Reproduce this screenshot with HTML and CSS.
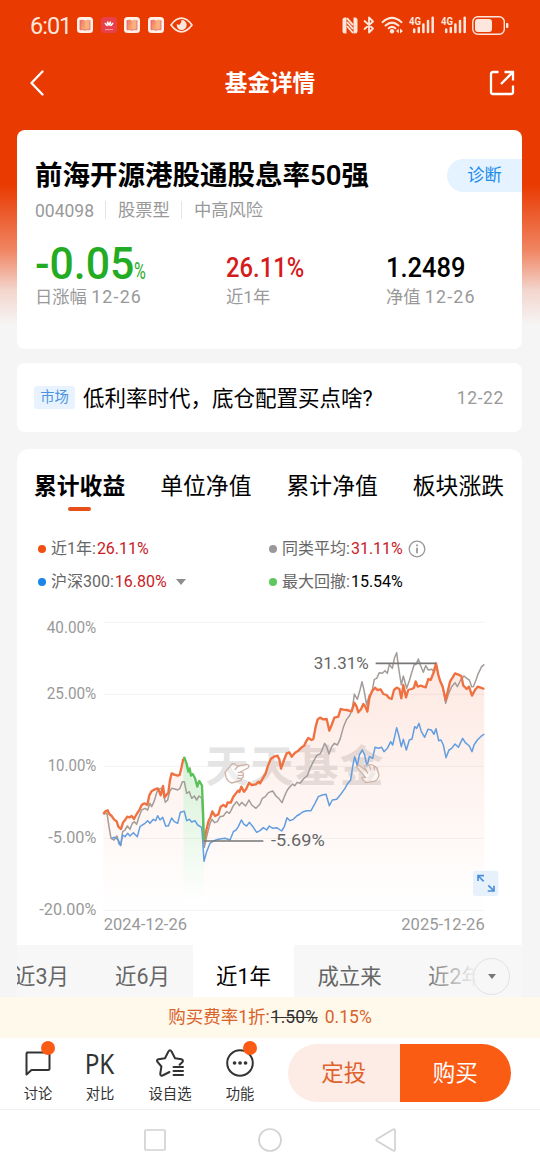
FILE: index.html
```html
<!DOCTYPE html>
<html lang="zh-CN">

<head>
    <meta charset="UTF-8">
    <meta name="viewport" content="width=device-width, initial-scale=1.0">
    <title>基金详情</title>
    <link rel="stylesheet" href="styles.css">
</head>

<body>
    <!-- Shared icons -->
    <svg width="0" height="0" class="defs">
        <defs>
            <linearGradient id="book-fill" x1="0" y1="0" x2="1" y2="1">
                <stop offset="0" stop-color="#f0707a" />
                <stop offset="1" stop-color="#f8b45c" />
            </linearGradient>
            <symbol id="book" viewBox="0 0 16 16">
                <rect width="16" height="16" rx="3.5" fill="#fff0e8" />
                <path d="M3 3.2Q5.500 2.400 8 3.500V13.200Q5.500 12.200 3 12.800Z" fill="url(#book-fill)" />
                <path d="M8 3.500Q10.500 2.400 13 3.200V12.800Q10.500 12.200 8 13.200Z" fill="#f8b080" />
                <path d="M3 3.200V12.800Q5.500 12.200 8 13.200Q10.500 12.200 13 12.800V3.200" fill="none" stroke="#e0566c" stroke-width=".7" />
            </symbol>
            <symbol id="signal" viewBox="0 0 26 18">
                <text x="0" y="8.500" class="signal-text" textLength="12" lengthAdjust="spacingAndGlyphs">4G</text>
                <g stroke="#fde6dc" stroke-width="2.500" stroke-linecap="round">
                    <path d="M5.200 13.500V16M9.800 12V16M14.400 8.500V16M19 5V16M23.700 1.800V16" />
                </g>
            </symbol>
        </defs>
    </svg>

    <div class="header">
        <div class="status-bar">
            <span class="clock">6:01</span>
            <div class="notices">
                <svg width="16" height="16"><use href="#book" /></svg>
                <svg width="16" height="16" viewBox="0 0 16 16">
                    <rect width="16" height="16" rx="3.5" fill="#e8404a" />
                    <g fill="#fff">
                        <ellipse cx="7" cy="6.500" rx="1" ry="2.400" transform="rotate(-14 7 6.500)" />
                        <ellipse cx="9" cy="6.500" rx="1" ry="2.400" transform="rotate(14 9 6.500)" />
                        <ellipse cx="5.200" cy="7.500" rx=".9" ry="2.200" transform="rotate(-42 5.200 7.500)" />
                        <ellipse cx="10.800" cy="7.500" rx=".9" ry="2.200" transform="rotate(42 10.800 7.500)" />
                        <rect x="4" y="12.300" width="8" height=".8" opacity=".6" />
                    </g>
                </svg>
                <svg width="16" height="16"><use href="#book" /></svg>
                <svg width="16" height="16"><use href="#book" /></svg>
            </div>
            <svg class="eye" width="23" height="16" viewBox="0 0 23 16">
                <path d="M1 8Q6 1.200 11.500 1.200T22 8Q17 14.800 11.500 14.800T1 8Z" fill="none" stroke="#fde6dc" stroke-width="1.700" />
                <path d="M11.500 3A5 5 0 1 1 6.800 7Q8.500 8.500 10 7.200T11.500 3Z" fill="#fde6dc" />
            </svg>
            <div class="status-right">
                <svg width="16" height="17" viewBox="0 0 16 17">
                    <path d="M4.500.5H3Q.5.5.5 3V14Q.5 16.500 3 16.500H4.500ZM11.500.5H13Q15.500.5 15.500 3V14Q15.500 16.500 13 16.500H11.500Z" fill="#fde6dc" />
                    <path d="M5 5L11 12M5 1.200L11 8.200M5 9L11 16" stroke="#fde6dc" stroke-width="1.900" />
                </svg>
                <svg width="12" height="18" viewBox="0 0 12 18">
                    <path d="M1.500 5L10 12.500L6 16.500V1.500L10 5.500L1.500 13" fill="none" stroke="#fde6dc" stroke-width="1.800" stroke-linejoin="round" stroke-linecap="round" />
                </svg>
                <svg width="23" height="18" viewBox="0 0 23 18">
                    <g fill="none" stroke="#fde6dc" stroke-width="2" stroke-linecap="round">
                        <path d="M1.500 6.200Q11 -2.400 20.500 6.200" />
                        <path d="M4.500 9.500Q11 3.700 17.500 9.500" />
                        <path d="M7.600 12.300Q11 9.500 14.400 12.300" />
                    </g>
                    <circle cx="11" cy="15.300" r="2.200" fill="#fde6dc" />
                    <path d="M15 15L17.800 12.500V17.500ZM22 15L19 12.500V17.500Z" fill="#fde6dc" />
                </svg>
                <svg width="26" height="18"><use href="#signal" /></svg>
                <svg width="26" height="18"><use href="#signal" /></svg>
                <svg width="37" height="19" viewBox="0 0 37 19">
                    <rect x=".8" y=".8" width="31.500" height="17.400" rx="5" fill="none" stroke="#fde6dc" stroke-width="1.400" />
                    <rect x="3" y="3" width="17" height="13" rx="3" fill="#fde6dc" />
                    <rect x="34" y="7" width="2.400" height="5" rx="1" fill="#fde6dc" />
                </svg>
            </div>
        </div>
        <div class="nav-bar">
            <svg width="16" height="26" viewBox="0 0 16 26">
                <path d="M13.500 1.500L2.500 13L13.500 24.500" fill="none" stroke="#fff" stroke-width="2.300" stroke-linecap="round" stroke-linejoin="round" />
            </svg>
            <h1>基金详情</h1>
            <svg width="26" height="26" viewBox="0 0 26 26">
                <path d="M9.500 2H4Q2 2 2 4V22Q2 24 4 24H22Q24 24 24 22V15.500" fill="none" stroke="#fff" stroke-width="2.300" />
                <path d="M12 14L23.500 2.500M15.500 2H24V10.500" fill="none" stroke="#fff" stroke-width="2.300" />
            </svg>
        </div>
    </div>

    <div class="content">
        <!-- Fund summary -->
        <div class="card summary">
            <div class="title-row">
                <h2>前海开源港股通股息率50强</h2>
                <span class="diagnose">诊断</span>
            </div>
            <div class="meta">
                <span class="code">004098</span>
                <span>股票型</span>
                <span>中高风险</span>
            </div>
            <div class="figures">
                <div class="figure">
                    <div class="value big green"><span class="num day">-0.05</span><span class="percent">%</span></div>
                    <div class="caption">日涨幅 <span>12-26</span></div>
                </div>
                <div class="figure">
                    <div class="value red"><span class="num year">26.11%</span></div>
                    <div class="caption">近1年</div>
                </div>
                <div class="figure">
                    <div class="value"><span class="num worth">1.2489</span></div>
                    <div class="caption">净值 <span>12-26</span></div>
                </div>
            </div>
        </div>

        <!-- News -->
        <div class="card news">
            <span class="tag">市场</span>
            <span class="news-title">低利率时代，底仓配置买点啥?</span>
            <span class="news-date">12-22</span>
        </div>

        <!-- Chart -->
        <div class="card performance">
            <div class="tabs">
                <span class="tab active">累计收益</span>
                <span class="tab">单位净值</span>
                <span class="tab">累计净值</span>
                <span class="tab">板块涨跌</span>
            </div>
            <div class="legend">
                <div class="legend-item"><i class="dot dot-orange"></i>近1年:<b class="red">26.11%</b></div>
                <div class="legend-item"><i class="dot dot-gray"></i>同类平均:<b class="red">31.11%</b>
                    <svg class="info" width="18" height="18" viewBox="0 0 18 18">
                        <circle cx="9" cy="9" r="7.800" fill="none" stroke="#999" stroke-width="1.300" />
                        <path d="M9 4.500V6.300M9 7.700V13.300" stroke="#999" stroke-width="1.800" />
                    </svg>
                </div>
                <div class="legend-item"><i class="dot dot-blue"></i>沪深300:<b class="red">16.80%</b><i class="caret"></i></div>
                <div class="legend-item"><i class="dot dot-green"></i>最大回撤:<b>15.54%</b></div>
            </div>
            <div class="chart">
                <svg width="505" height="335" viewBox="-234 0 1515 1005">
                    <defs>
                        <linearGradient id="area-orange" x1="0" y1="160" x2="0" y2="900" gradientUnits="userSpaceOnUse">
                            <stop offset="0" stop-color="#f4683a" stop-opacity=".15" />
                            <stop offset="1" stop-color="#f4683a" stop-opacity="0" />
                        </linearGradient>
                        <linearGradient id="area-green" x1="0" y1="440" x2="0" y2="880" gradientUnits="userSpaceOnUse">
                            <stop offset="0" stop-color="#55c455" stop-opacity=".25" />
                            <stop offset="1" stop-color="#55c455" stop-opacity="0" />
                        </linearGradient>
                    </defs>
                    <path class="grid" d="M25 37H1168M25 253H1168M25 469H1168M25 685H1168M25 901H1168" />
                    <text class="watermark" x="331" y="516" textLength="534">天天基金</text>
                    <path fill="url(#area-orange)" d="M25 612L38 601L78 657L97 620L117 627L140 585L157 585L170 543L188 535L197 556L204 528L209 562L220 548L230 490L254 495L265 446L265 901H25Z
                        M327 695L352 604L370 613L439 530L447 545L462 518L483 523L512 490L537 440L547 437L558 476L575 430L590 440L640 384L655 387L668 328L695 327L703 362L718 323L730 320L737 297L755 300L770 304L778 278L790 307L805 282L817 305L830 245L840 233L865 252L890 267L905 233L919 265L925 225L933 262L957 233L962 214L968 230L992 232L1023 160L1052 270L1065 215L1080 190L1099 198L1105 227L1122 230L1131 257L1148 230L1168 237V901H327Z" />
                    <path fill="url(#area-green)" d="M265 446L268 443L280 485L307 530L321 527L327 690V901H265Z" />
                    <polyline class="line gray" points="25,612 36,610 42,650 48,685 57,690 66,678 72,702 77,705 83,665 90,660 97,648 105,658 112,640 118,635 125,643 132,620 140,600 150,595 158,600 165,580 170,590 177,575 186,545 193,537 200,535 207,560 211,577 218,570 224,545 230,535 240,537 248,540 255,535 262,515 268,515 275,550 283,545 290,565 298,558 305,570 312,558 321,565 324,650 328,712
                        335,680 345,640 351,628 359,638 367,635 375,620 385,618 395,605 403,610 408,602 415,587 425,575 433,587 440,577 452,588 462,570 470,585 483,595 495,582 502,565 511,560 520,548 533,543 543,558 551,565 561,578 570,555 577,540 585,530 593,522 599,527 607,517 615,520 627,505 637,497 645,475 655,455 665,437 677,430 689,400 695,410 702,432 710,410 718,400 727,405 735,388
                        745,352 755,328 765,315 773,290 778,252 787,268 795,240 801,215 807,240 815,285 823,255 830,250 838,208 845,205 853,188 862,190 870,182 877,190 883,163 892,175 898,145 905,128 911,175 919,225 925,198 935,235 943,212 950,188 957,165 963,163 970,147 976,165 985,187 992,167 1000,180 1010,178 1018,185 1023,165 1033,205 1043,230 1052,280 1061,250 1070,230 1080,218 1087,230 1097,210 1107,198 1115,205 1123,210 1130,230 1135,230 1143,210 1150,190 1160,170 1168,163" />
                    <polyline class="line blue" points="50,685 60,682 70,690 77,707 83,675 90,680 98,670 105,678 115,668 127,680 135,650 142,645 150,640 158,632 165,640 175,628 182,632 188,617 195,630 203,622 212,648 220,648 230,624 238,635 248,640 256,607 268,604 275,632 283,628 290,636 300,632 308,645 320,652 323,690 327,754
                        335,725 345,700 355,693 370,688 390,685 405,690 415,665 423,660 430,650 439,630 447,643 455,648 463,637 475,652 485,667 495,662 505,653 515,660 523,648 533,655 545,653 560,663 568,650 576,623 585,632 595,628 605,618 615,612 625,605 635,602 648,602 660,580 670,560 682,555 693,553 703,587 712,570 725,568 735,556
                        743,545 750,535 757,522 767,510 773,470 779,440 787,468 793,435 802,420 809,435 816,470 823,440 833,445 840,412 850,415 860,412 867,425 877,415 887,395 893,405 899,380 905,353 911,375 919,410 925,388 934,420 943,390 951,387 959,350 965,355 972,340 979,365 989,382 999,358 1009,360 1017,373 1023,356 1031,392 1038,390 1045,405 1053,443 1062,420 1070,415 1080,402 1090,412 1103,385 1111,398 1123,408 1131,425 1137,405 1147,390 1157,380 1168,372" />
                    <polyline class="line orange" points="25,612 30,605 38,601 43,612 50,618 57,628 65,634 70,650 78,657 84,638 90,630 97,620 104,622 110,618 117,627 125,612 132,602 140,585 148,580 157,585 163,556 170,543 180,538 188,535 193,545 197,556 204,528 209,562 216,553 220,548 225,510 230,490 238,494 248,497 254,495 260,470 265,446" />
                    <polyline class="line orange" points="327,695 333,665 340,635 347,620 352,604 360,618 370,613 377,590 385,585 393,590 398,577 407,578 415,560 423,550 429,542 433,546 439,530 447,545 453,538 462,518 470,525 483,523 490,515 495,520 505,502 512,490 518,470 528,446 537,440 547,437 553,448 558,476 567,450 575,430 583,427 590,440 600,428 610,422 620,412 627,408 633,395 640,384 650,390 655,387 662,350 668,328 675,323 685,328 695,327 703,362 710,345 718,323 730,320 737,297 745,299
                        755,300 770,304 778,278 785,290 790,307 798,298 805,282 811,290 817,305 823,265 830,245 840,233 847,240 857,238 865,252 875,255 882,264 890,267 897,240 905,233 913,237 919,265 925,225 933,262 940,240 950,237 957,233 962,214 968,230 977,227 985,230 992,232 1000,207 1007,210 1015,190 1023,160 1030,195 1035,212 1043,230 1052,270 1058,245 1065,215 1073,202 1080,190 1090,194 1099,198 1105,227 1115,237 1122,230 1131,257 1140,240 1148,230 1157,233 1168,237" />
                    <polyline class="line green-line" points="265,446 268,443 275,462 280,485 284,475 288,497 293,492 300,505 307,530 313,513 321,527 324,600 327,692" />
                    <path class="marker" d="M842 160H1023M327 693H505" />
                    <!-- Pointing hands over the watermark -->
                    <g class="hand">
                        <path d="M390 487L410 463Q417 458 424 466L430 468L456 463Q466 466 459 474L436 486Q448 487 444 495Q448 501 440 505Q440 513 432 513L410 519Q400 516 394 504ZM430 468L419 480M428 487H436M428 496H443M426 505H440" />
                        <path d="M784 470Q788 464 795 468L815 484L808 469Q814 461 822 466Q830 461 836 468Q842 468 846 476L852 495Q850 508 838 514L812 518L803 508Q796 501 806 502L812 503ZM822 466L828 479M836 468L839 480M815 484L819 491" />
                    </g>
                    <g class="axis">
                        <text x="4" y="70" text-anchor="end" textLength="149" lengthAdjust="spacingAndGlyphs">40.00%</text>
                        <text x="4" y="267" text-anchor="end" textLength="149" lengthAdjust="spacingAndGlyphs">25.00%</text>
                        <text x="4" y="483" text-anchor="end" textLength="146" lengthAdjust="spacingAndGlyphs">10.00%</text>
                        <text x="4" y="699" text-anchor="end" textLength="144" lengthAdjust="spacingAndGlyphs">-5.00%</text>
                        <text x="4" y="915" text-anchor="end" textLength="171" lengthAdjust="spacingAndGlyphs">-20.00%</text>
                        <text x="26" y="961" textLength="250" lengthAdjust="spacingAndGlyphs">2024-12-26</text>
                        <text x="1169" y="961" text-anchor="end" textLength="250" lengthAdjust="spacingAndGlyphs">2025-12-26</text>
                    </g>
                    <g class="extreme">
                        <text x="656" y="176" textLength="165" lengthAdjust="spacingAndGlyphs">31.31%</text>
                        <text x="528" y="709" textLength="161" lengthAdjust="spacingAndGlyphs">-5.69%</text>
                    </g>
                    <rect x="1134" y="782" width="76" height="76" rx="8" fill="#e7f1fc" />
                    <path class="expand" d="M1149 813V797H1167M1150 798L1166 814M1197 827V843H1178M1196 842L1180 826" />
                </svg>
            </div>
            <div class="ranges">
                <span class="range">近3月</span>
                <span class="range">近6月</span>
                <span class="range active">近1年</span>
                <span class="range wide">成立来</span>
                <span class="range">近2年</span>
                <div class="more"><span class="more-button"><i class="caret"></i></span></div>
            </div>
        </div>
    </div>

    <div class="fee">购买费率1折:<s>1.50%</s><span class="discount">0.15%</span></div>

    <div class="bottom-bar">
        <div class="action">
            <svg width="30" height="30" viewBox="0 0 30 30">
                <path d="M4 4.500H25Q26.500 4.500 26.500 6V20.500Q26.500 22 25 22H8.500L3.500 26.500V6Q3.500 4.500 5 4.500Z" />
            </svg>
            <i class="badge"></i>
            <span>讨论</span>
        </div>
        <div class="action">
            <div class="pk">PK</div>
            <span>对比</span>
        </div>
        <div class="action">
            <svg width="30" height="30" viewBox="0 0 30 30">
                <path d="M14.500 24L7.500 27.500Q5 28.200 5.300 25.500L6.400 18.500L2.300 13.700Q1.300 11.700 3.500 11.200L10 10.200L13.400 3.500Q15 1.200 16.600 3.500L20 10.200L26.500 11.200Q28.700 12 27.500 14L24.600 16.800M18.500 19H28M18.500 23H28M18.500 27H28" />
            </svg>
            <span>设自选</span>
        </div>
        <div class="action">
            <svg width="30" height="30" viewBox="0 0 30 30">
                <circle cx="15" cy="15" r="12.800" />
                <path d="M9.500 15H9.600M15 15H15.100M20.500 15H20.600" class="dots" />
            </svg>
            <i class="badge"></i>
            <span>功能</span>
        </div>
        <div class="buttons">
            <button class="plan">定投</button>
            <button class="buy">购买</button>
        </div>
    </div>

    <div class="system-nav">
        <svg width="24" height="24" viewBox="0 0 24 24"><rect x="2" y="2" width="20" height="20" rx="1" /></svg>
        <svg width="24" height="24" viewBox="0 0 24 24"><circle cx="12" cy="12" r="11" /></svg>
        <svg width="24" height="24" viewBox="0 0 24 24"><path d="M21 2.500V21.500Q21 23.500 19 22.500L3 13Q1.500 12 3 11L19 1.500Q21 .5 21 2.500Z" /></svg>
    </div>
</body>

</html>
```
FILE: styles.css
```css
/* General */
* {
    box-sizing: border-box;
}

body {
    margin: 0;
    width: 540px;
    height: 1170px;
    overflow: hidden;
    display: flex;
    flex-direction: column;
    font-family: Roboto, "Noto Sans CJK SC", sans-serif;
    color: #000;
    background: linear-gradient(#e93a02 0, #e93a02 185px, #f08562 250px, #f3d5cc 290px, #f5f5f5 325px);
}

h1,
h2 {
    margin: 0;
}

svg {
    display: block;
    flex: none;
}

.defs {
    position: absolute;
}

.red {
    color: #d41c1c;
}

.green {
    color: #23ac23;
}

/* Header */
.header {
    flex: none;
    height: 130px;
}

.status-bar {
    display: flex;
    align-items: center;
    height: 50px;
    padding: 0 31px 0 30px;
}

.clock {
    width: 47px;
    padding-top: 2px;
    font-size: 23.5px;
    letter-spacing: -1px;
    color: #fde6dc;
}

.notices {
    display: flex;
    gap: 7.7px;
}

.eye {
    margin-left: 6px;
}

.signal-text {
    font-size: 11px;
    font-weight: 700;
    fill: #fde6dc;
}

.status-right {
    display: flex;
    align-items: center;
    gap: 5.5px;
    margin-left: auto;
}

.nav-bar {
    display: flex;
    align-items: center;
    justify-content: space-between;
    height: 66px;
    padding: 0 25px 0 29px;
}

.nav-bar h1 {
    font-size: 22.6px;
    color: #fff;
    padding: 0 0 3px 6px;
}

/* Cards */
.content {
    flex: 1;
    min-height: 0;
    padding: 0 18px 0 17px;
}

.card {
    background: #fff;
    border-radius: 8px;
}

.summary {
    height: 219px;
    padding: 24px 0 0 18px;
}

.title-row {
    display: flex;
    justify-content: space-between;
    align-items: center;
    height: 42px;
}

.title-row h2 {
    padding-bottom: 4px;
    font-size: 27.5px;
    font-weight: 600;
    white-space: nowrap;
}

.diagnose {
    width: 75px;
    height: 33px;
    line-height: 32px;
    border-radius: 17px 0 0 17px;
    background: #e4f3ff;
    color: #1b8bea;
    font-size: 17.3px;
    text-align: center;
}

.meta {
    display: flex;
    align-items: center;
    height: 28px;
    font-size: 17.3px;
    line-height: 18px;
    color: #999;
}

.meta span + span {
    margin-left: 11px;
    padding-left: 12px;
    border-left: 1px solid #e4e4e4;
}

.meta .code {
    font-size: 17.5px;
    padding-top: 2px;
}

.figures {
    display: grid;
    grid-template-columns: 191px 160px auto;
    margin-top: 18px;
}

.value {
    display: flex;
    align-items: baseline;
    height: 43px;
    line-height: 52px;
    font-size: 28px;
    font-weight: 500;
    white-space: nowrap;
}

.big {
    font-size: 45px;
    line-height: 44px;
}

/* Narrow digits */
.num {
    display: inline-block;
    transform-origin: left;
}

.day {
    width: 99px;
    transform: scaleX(.95);
}

.year {
    transform: scaleX(.85);
}

.worth {
    transform: scaleX(.91);
}

.percent {
    font-size: 23px;
    font-weight: 400;
    display: inline-block;
    transform: scaleX(.7);
    transform-origin: left;
}

.caption {
    font-size: 17.3px;
    line-height: 24px;
    color: #999;
}

.caption span {
    font-size: 17.8px;
    letter-spacing: 1.2px;
}

/* News */
.news {
    display: flex;
    align-items: center;
    height: 69px;
    margin-top: 14px;
    padding: 0 18px 0 17px;
}

.tag {
    width: 41px;
    height: 23px;
    line-height: 23px;
    border-radius: 3px;
    background: #e8f3ff;
    color: #4b93df;
    font-size: 14.3px;
    text-align: center;
}

.news-title {
    margin-left: 8px;
    padding-bottom: 3px;
    font-size: 21.5px;
    white-space: nowrap;
}

.news-date {
    margin-left: auto;
    font-size: 17.5px;
    letter-spacing: .6px;
    color: #999;
}

/* Performance card */
.performance {
    margin-top: 17px;
    height: 548px;
    border-radius: 12px 12px 0 0;
}

.tabs {
    display: flex;
    justify-content: space-between;
    height: 83px;
    padding: 21px 18px 0 17px;
}

.tab {
    display: flex;
    flex-direction: column;
    align-items: center;
    font-size: 22.8px;
    line-height: 34px;
}

.tab.active {
    font-weight: 700;
}

.tab.active::after {
    content: "";
    width: 23px;
    height: 4px;
    margin-top: 3px;
    border-radius: 2px;
    background: #e5501a;
}

.legend {
    display: grid;
    grid-template-columns: 231px auto;
    grid-auto-rows: 33px;
    height: 78px;
    padding-left: 21px;
}

.legend-item {
    display: flex;
    align-items: center;
    font-size: 16px;
    line-height: 24px;
    color: #666;
}

.legend-item b {
    font-weight: 400;
    color: #000;
    margin-left: 1px;
    padding-top: 1px;
}

.legend-item b.red {
    color: #c9201f;
}

.dot {
    width: 8px;
    height: 8px;
    margin-right: 5px;
    border-radius: 50%;
}

.dot-orange {
    background: #f04e12;
}

.dot-gray {
    background: #999;
}

.dot-blue {
    background: #1a86e8;
}

.dot-green {
    background: #5fc75f;
}

.info {
    margin-left: 5px;
}

.caret {
    border: 5px solid transparent;
    border-top: 6px solid #8d8d8d;
    border-bottom: 0;
    margin-left: 9px;
}

/* Chart */
.chart {
    height: 335px;
}

.grid {
    stroke: #f2f2f2;
    stroke-width: 3;
}

.watermark {
    font-family: "Noto Sans CJK SC", sans-serif;
    font-size: 131px;
    font-weight: 700;
    fill: #e4e4e4;
}

.line {
    fill: none;
    stroke-width: 4.5;
    stroke-linejoin: round;
}

.line.gray {
    stroke: #a39c99;
}

.line.blue {
    stroke: #629de0;
}

.line.orange {
    stroke: #f07040;
    stroke-width: 7;
}

.line.green-line {
    stroke: #58c158;
    stroke-width: 7;
}

.marker {
    fill: none;
    stroke: #777;
    stroke-width: 5;
}

.hand {
    fill: #fff;
    fill-opacity: .4;
    stroke: #cfb3a6;
    stroke-width: 4;
    stroke-linejoin: round;
}

.axis {
    font-size: 47px;
    fill: #999;
}

.extreme {
    font-size: 51px;
    fill: #666;
}

.expand {
    fill: none;
    stroke: #4a8fdc;
    stroke-width: 5;
}

/* Time ranges */
.ranges {
    position: relative;
    display: flex;
    height: 52px;
    overflow: hidden;
    background: #f7f7f7;
}

.range {
    flex: none;
    width: 101px;
    line-height: 63px;
    font-size: 21.4px;
    text-align: center;
    color: #666;
}

.range:first-child {
    margin-left: -26px;
}

.range.wide {
    width: 111px;
}

.range.active {
    background: #fff;
    color: #000;
}

/* Fades out the last range */
.more {
    position: absolute;
    right: 0;
    top: 0;
    display: flex;
    align-items: center;
    width: 100px;
    height: 52px;
    padding: 10px 0 0 51px;
    background: linear-gradient(90deg, rgba(247, 247, 247, 0), #f7f7f7 55px);
}

.more-button {
    display: flex;
    align-items: center;
    justify-content: center;
    width: 37px;
    height: 37px;
    border: 1px solid #e2e2e2;
    border-radius: 50%;
}

.more .caret {
    margin: 0;
    border-width: 5px 4px 0;
    border-top-color: #777;
}

/* Fee */
.fee {
    flex: none;
    height: 41px;
    line-height: 41px;
    text-align: center;
    font-size: 17.5px;
    background: #fff9ec;
    color: #d9632a;
}

.fee s {
    margin-left: 1px;
    color: #333;
}

.discount {
    margin-left: 7px;
}

/* Bottom bar */
.bottom-bar {
    flex: none;
    display: flex;
    height: 72px;
    padding: 6px 29px 0 3px;
    background: #fff;
    border-bottom: 1px solid #f2f2f2;
}

.action {
    position: relative;
    display: flex;
    flex-direction: column;
    align-items: center;
    width: 70px;
    padding-top: 4px;
    font-size: 14.3px;
    line-height: 32px;
    color: #333;
}

.action:nth-child(2) {
    width: 54px;
}

.action:nth-child(3) {
    width: 86px;
}

.action:nth-child(4) {
    width: 54px;
}

.action svg {
    fill: none;
    stroke: #333;
    stroke-width: 2;
    stroke-linejoin: round;
    stroke-linecap: round;
}

.action .dots {
    stroke-width: 3.6;
}

.pk {
    height: 30px;
    line-height: 32px;
    font-family: "Noto Sans", sans-serif;
    font-size: 27px;
    transform: scaleX(.9);
}

.badge {
    position: absolute;
    top: -3px;
    left: calc(50% + 3px);
    width: 14px;
    height: 14px;
    border-radius: 50%;
    background: #fb5c14;
}

.buttons {
    display: flex;
    width: 223px;
    height: 58px;
    margin-left: auto;
    border-radius: 29px;
    overflow: hidden;
}

.buttons button {
    flex: 1;
    padding: 0 0 4px;
    border: none;
    font-family: inherit;
    font-size: 22.5px;
}

.plan {
    background: #fdece5;
    color: #e0622f;
}

.buy {
    background: #fb5c14;
    color: #fff;
}

/* System navigation */
.system-nav {
    flex: none;
    display: flex;
    justify-content: center;
    align-items: center;
    gap: 91.5px;
    height: 60px;
    background: #fff;
}

.system-nav svg {
    fill: none;
    stroke: #d2d2d2;
    stroke-width: 1.7;
}
```
